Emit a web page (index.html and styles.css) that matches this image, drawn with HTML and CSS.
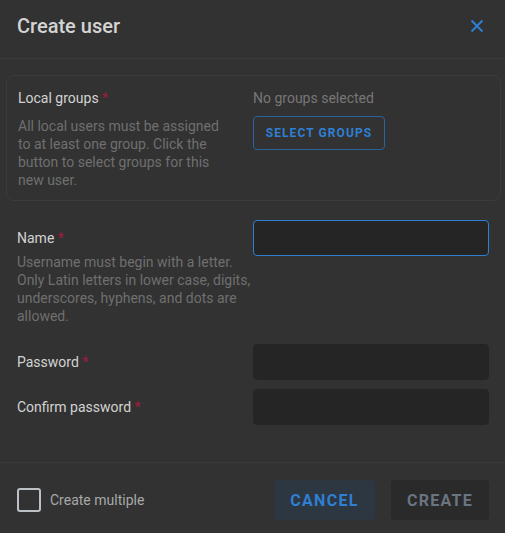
FILE: index.html
```html
<!DOCTYPE html>
<html lang="en">
  <head>
    <meta charset="UTF-8" />
    <title>Create user</title>
    <link rel="stylesheet" href="styles.css">
  </head>
  <body>
    <div class="dialog">
      <header class="dialog-header">
        <h1>Create user</h1>
        <button class="close" aria-label="Close">
          <svg width="14" height="14" viewBox="0 0 14 14">
            <path d="M1.5 1.5 L12.5 12.5 M12.5 1.5 L1.5 12.5" stroke="currentColor" stroke-width="2" fill="none" />
          </svg>
        </button>
      </header>

      <section class="dialog-body">
        <div class="group-box">
          <div class="field-info">
            <div class="label">Local groups <span class="req">*</span></div>
            <p class="hint">All local users must be assigned to at least one group. Click the button to select groups for this new user.</p>
          </div>
          <div class="groups">
            <div class="muted">No groups selected</div>
            <button class="outline-btn">Select groups</button>
          </div>
        </div>

        <div class="row row-name">
          <div class="field-info">
            <div class="label">Name <span class="req">*</span></div>
            <p class="hint hint-name">Username must begin with a letter. Only Latin letters in lower case, digits, underscores, hyphens, and dots are allowed.</p>
          </div>
          <input class="input focused" type="text" />
        </div>

        <div class="row">
          <div class="field-info">
            <div class="label">Password <span class="req">*</span></div>
          </div>
          <input class="input" type="password" />
        </div>

        <div class="row row-confirm">
          <div class="field-info">
            <div class="label">Confirm password <span class="req">*</span></div>
          </div>
          <input class="input" type="password" />
        </div>
      </section>

      <footer class="dialog-footer">
        <label class="check">
          <span class="box"></span>
          Create multiple
        </label>
        <div class="actions">
          <button class="btn btn-cancel">Cancel</button>
          <button class="btn btn-create" disabled>Create</button>
        </div>
      </footer>
    </div>
  </body>
</html>
```

FILE: styles.css
```css
:root {
  --bg: #323232;
  --line: #3b3b3b;
  --text: #d2d2d2;
  --muted: #6f6f6f;
  --blue: #2f7fd3;
  --req: #a31a40;
  --input-bg: #252525;
}

html,
body {
  margin: 0;
  padding: 0;
}

body {
  width: 505px;
  height: 533px;
  background-color: var(--bg);
  font-family: Roboto, "Noto Sans", sans-serif;
  font-size: 14px;
  color: var(--text);
  overflow: hidden;
}

.dialog-header {
  height: 59px;
  box-sizing: border-box;
  padding: 14px 16px 0 17px;
  display: flex;
  justify-content: space-between;
  align-items: flex-start;
  border-bottom: 1px solid var(--line);
}

h1 {
  margin: 0;
  font-size: 20px;
  line-height: 24px;
  font-weight: 500;
  color: #d4d4d4;
}

.close {
  margin: 5px 5px 0 0;
  padding: 0;
  background: none;
  border: 0;
  color: var(--blue);
  width: 14px;
  height: 14px;
  display: flex;
  cursor: pointer;
}

.dialog-body {
  padding: 16px 0 0;
}

.group-box {
  margin: 0 4px 0 6px;
  border: 1px solid var(--line);
  border-radius: 8px;
  padding: 12px 12px 11px 11px;
  display: grid;
  grid-template-columns: 235px 1fr;
}

.label {
  line-height: 20px;
  color: var(--text);
}

.req {
  color: var(--req);
}

.hint {
  margin: 9px 0 0;
  line-height: 18px;
  color: var(--muted);
  max-width: 212px;
}

.hint-name {
  margin-top: 5px;
  max-width: none;
}

.muted {
  line-height: 20px;
  color: #777;
}

.outline-btn {
  margin-top: 8px;
  width: 132px;
  height: 34px;
  background: none;
  border: 1px solid #2a62a0;
  border-radius: 4px;
  color: var(--blue);
  font-family: Roboto, sans-serif;
  font-size: 12px;
  font-weight: 700;
  letter-spacing: 1.1px;
  text-transform: uppercase;
  cursor: pointer;
}

.row {
  display: grid;
  grid-template-columns: 236px 236px;
  padding: 0 16px 0 17px;
  align-items: start;
}

.row .field-info {
  padding-top: 8px;
}

.row-name {
  margin: 19px 0 19px;
}

.row-confirm {
  margin-top: 9px;
}

.input {
  box-sizing: border-box;
  width: 236px;
  height: 36px;
  margin: 0;
  background-color: var(--input-bg);
  border: 1px solid var(--input-bg);
  border-radius: 4px;
  outline: none;
  color: var(--text);
}

.input.focused {
  border-color: var(--blue);
}

.dialog-footer {
  margin-top: 37px;
  border-top: 1px solid var(--line);
  height: 70px;
  padding: 17px 16px 0 17px;
  box-sizing: border-box;
  display: flex;
  align-items: flex-start;
  justify-content: space-between;
}

.check {
  margin-top: 8px;
  display: flex;
  align-items: center;
  gap: 9px;
  color: #a8a8a8;
  line-height: 20px;
}

.box {
  width: 24px;
  height: 24px;
  box-sizing: border-box;
  border: 2px solid #bcc1c7;
  border-radius: 3px;
}

.actions {
  display: flex;
  gap: 16px;
}

.btn {
  height: 40px;
  border: 0;
  border-radius: 4px;
  font-family: Roboto, sans-serif;
  font-size: 16px;
  font-weight: 700;
  letter-spacing: 1.3px;
  text-transform: uppercase;
  cursor: pointer;
}

.btn-cancel {
  width: 101px;
  background-color: #2d3742;
  color: var(--blue);
}

.btn-create {
  width: 98px;
  background-color: #2a2a2a;
  color: #6a7582;
}
```
